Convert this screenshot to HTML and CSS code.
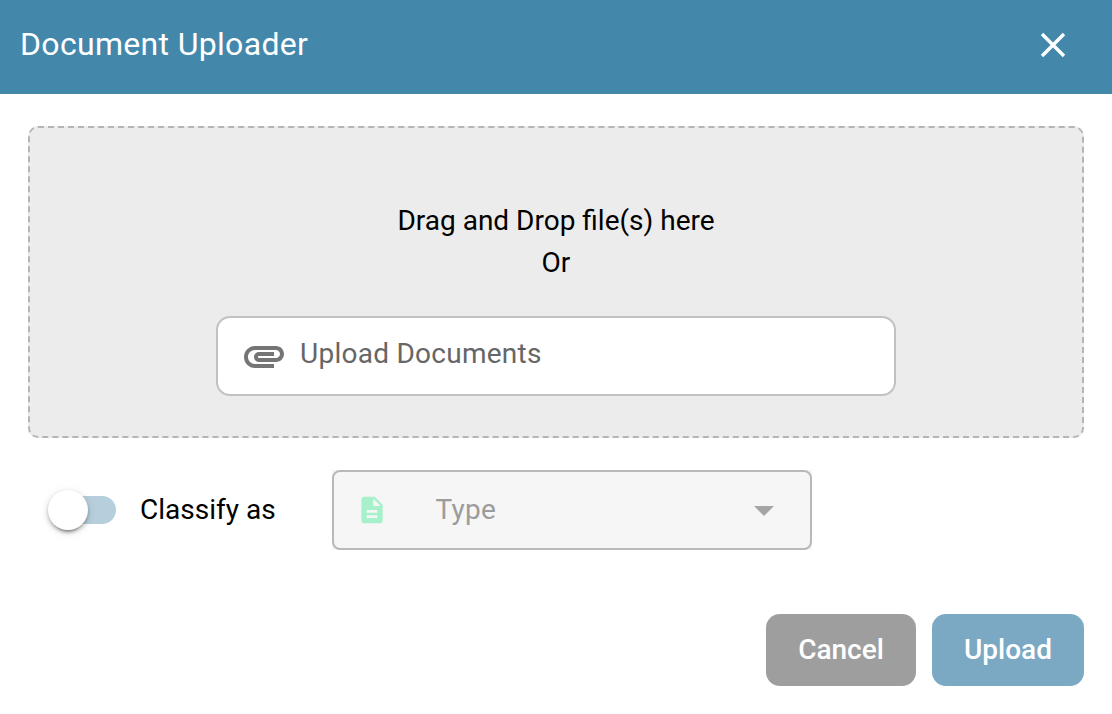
FILE: index.html
```html
<!DOCTYPE html>
<html lang="en">
<head>
<meta charset="utf-8">
<title>Document Uploader</title>
<link rel="stylesheet" href="styles.css">
</head>
<body>
<div class="dialog">
  <header class="header">
    <h1 class="title">Document Uploader</h1>
    <button class="close" aria-label="Close">
      <svg width="26" height="26" viewBox="0 0 26 26"><path d="M2 2L24 24M24 2L2 24" fill="none" stroke="#fff" stroke-width="3.4"/></svg>
    </button>
  </header>
  <main class="content">
    <section class="dropzone">
      <p class="hint">Drag and Drop file(s) here<br>Or</p>
      <button class="file-input">
        <svg class="clip" viewBox="0 0 24 24"><path d="M2 12.5C2 9.46 4.46 7 7.5 7H18c2.21 0 4 1.79 4 4s-1.79 4-4 4H9.5C8.12 15 7 13.88 7 12.5S8.12 10 9.5 10H17v2H9.41c-.55 0-.55 1 0 1H18c1.1 0 2-.9 2-2s-.9-2-2-2H7.5C5.57 9 4 10.57 4 12.5S5.57 16 7.5 16H17v2H7.5C4.46 18 2 15.54 2 12.5z"/></svg>
        <span class="file-label">Upload Documents</span>
      </button>
    </section>
    <section class="classify">
      <div class="toggle"><span class="track"></span><span class="thumb"></span></div>
      <span class="classify-label">Classify as</span>
      <div class="select-wrap">
        <div class="select">
          <svg class="doc" viewBox="0 0 24 24"><path d="M14 2H6c-1.1 0-1.99.9-1.99 2L4 20c0 1.1.89 2 1.99 2H18c1.1 0 2-.9 2-2V8l-6-6zm2 16H8v-2h8v2zm0-4H8v-2h8v2zm-3-5V3.5L18.5 9H13z"/></svg>
          <span class="select-label">Type</span>
          <svg class="arrow" viewBox="0 0 24 24"><path d="M7 10l5 5 5-5z"/></svg>
        </div>
      </div>
    </section>
    <footer class="actions">
      <button class="btn cancel">Cancel</button>
      <button class="btn upload">Upload</button>
    </footer>
  </main>
</div>
</body>
</html>
```

FILE: styles.css
```css
* { box-sizing: border-box; }
body { margin: 0; background: #fff; color: #000; font-family: Roboto, sans-serif; font-size: 28px; }
button { font: inherit; border: 0; padding: 0; background: none; }
svg { display: block; flex: none; }
.dialog { width: 1112px; height: 714px; overflow: hidden; }
.header { height: 94px; padding: 0 46px 4px 20px; background: #4387ab; display: flex; align-items: center; justify-content: space-between; }
.title { margin: 0; color: #fff; font-size: 32px; font-weight: 400; line-height: 40px; letter-spacing: 0.32px; padding-bottom: 2px; }
.close { width: 26px; height: 26px; }
.content { padding: 32px 28px 0; }
.dropzone { height: 312px; padding: 72px 186px 0; background: #ececec; border: 2px dashed #b5b5b5; border-radius: 10px; }
.hint { margin: 0; text-align: center; line-height: 42px; }
.file-input { margin-top: 32px; width: 680px; height: 80px; display: flex; align-items: center; padding-left: 22px; background: #fff; border: 2px solid #c1c1c1; border-radius: 14px; color: #666; text-align: left; }
.clip { width: 48px; height: 48px; fill: #757575; }
.file-label { margin-left: 12px; padding-bottom: 6px; letter-spacing: 0.26px; }
.classify { margin-top: 32px; height: 80px; display: flex; align-items: center; padding-left: 20px; }
.toggle { position: relative; width: 72px; height: 40px; padding: 6px 4px; }
.track { display: block; width: 64px; height: 28px; border-radius: 14px; background: #b7cfdd; }
.thumb { position: absolute; left: 0; top: 0; width: 40px; height: 40px; border-radius: 50%; background: #fff; box-shadow: 0 6px 2px -4px rgba(0,0,0,.2), 0 2px 4px rgba(0,0,0,.14), 0 2px 10px rgba(0,0,0,.12), 0 3px 4px -1px rgba(0,0,0,.18); }
.classify-label { width: 192px; margin-left: 20px; padding-bottom: 2px; }
.select-wrap { width: 480px; background: #f6f6f6; }
.select { height: 80px; display: flex; align-items: center; padding: 0 22.5px 0 21.5px; border: 2px solid #b9b9b9; border-radius: 8px; color: #9c9c9c; }
.doc { width: 32px; height: 32px; fill: #a7f0cc; }
.select-label { flex: 1; margin-left: 48px; padding-bottom: 2px; letter-spacing: 0.26px; }
.arrow { width: 48px; height: 48px; fill: #a5a5a5; }
.actions { margin-top: 64px; display: flex; justify-content: flex-end; gap: 16px; }
.btn { height: 72px; padding-bottom: 2px; border-radius: 14px; color: #fff; font-weight: 500; text-align: center; }
.cancel { width: 150px; background: #9e9e9e; }
.upload { width: 152px; background: #7ba9c4; }
```
